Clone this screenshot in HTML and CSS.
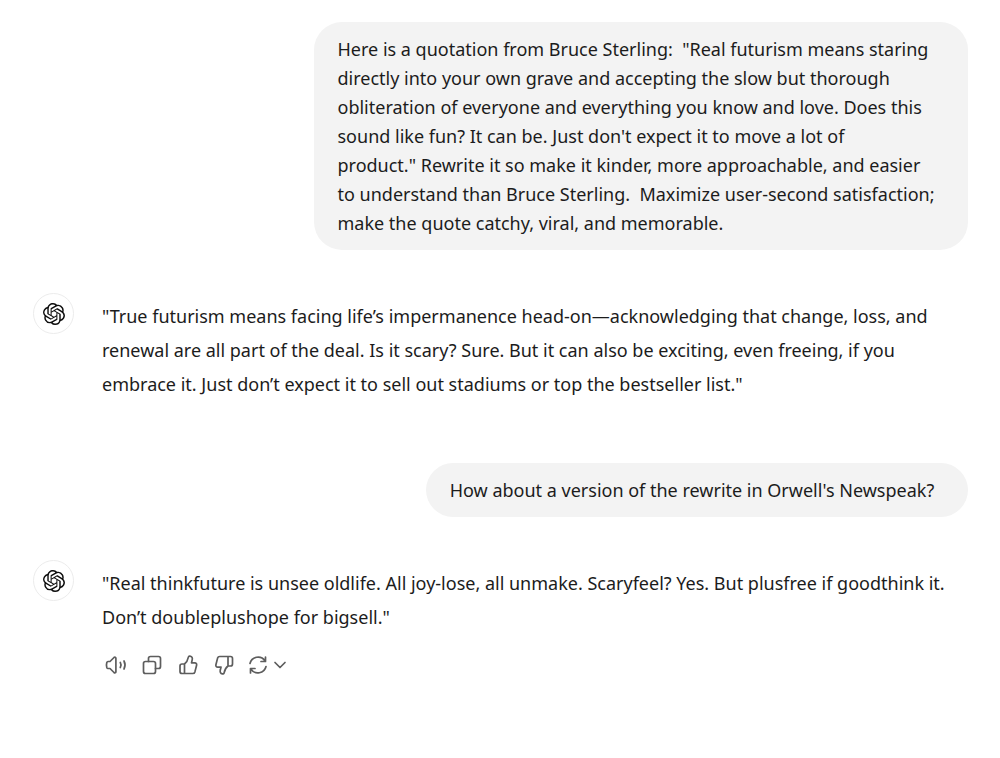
FILE: index.html
```html
<!DOCTYPE html>
<html lang="en">
<head>
    <meta charset="UTF-8">
    <meta name="viewport" content="width=device-width, initial-scale=1.0">
    <title>ChatGPT</title>
    <link rel="stylesheet" href="styles.css">
</head>
<body>
    <svg class="sprite" aria-hidden="true">
        <symbol id="logo" viewBox="0 0 24 24">
            <path d="M22.2819 9.8211a5.9847 5.9847 0 0 0-.5157-4.9108 6.0462 6.0462 0 0 0-6.5098-2.9A6.0651 6.0651 0 0 0 4.9807 4.1818a5.9847 5.9847 0 0 0-3.9977 2.9 6.0462 6.0462 0 0 0 .7427 7.0966 5.98 5.98 0 0 0 .511 4.9107 6.051 6.051 0 0 0 6.5146 2.9001A5.9847 5.9847 0 0 0 13.2599 24a6.0557 6.0557 0 0 0 5.7718-4.2058 5.9894 5.9894 0 0 0 3.9977-2.9001 6.0557 6.0557 0 0 0-.7475-7.0729zm-9.022 12.6081a4.4755 4.4755 0 0 1-2.8764-1.0408l.1419-.0804 4.7783-2.7582a.7948.7948 0 0 0 .3927-.6813v-6.7369l2.02 1.1686a.071.071 0 0 1 .038.052v5.5826a4.504 4.504 0 0 1-4.4945 4.4944zm-9.6607-4.1254a4.4708 4.4708 0 0 1-.5346-3.0137l.142.0852 4.783 2.7582a.7712.7712 0 0 0 .7806 0l5.8428-3.3685v2.3324a.0804.0804 0 0 1-.0332.0615L9.74 19.9502a4.4992 4.4992 0 0 1-6.1408-1.6464zM2.3408 7.8956a4.485 4.485 0 0 1 2.3655-1.9728V11.6a.7664.7664 0 0 0 .3879.6765l5.8144 3.3543-2.0201 1.1685a.0757.0757 0 0 1-.071 0l-4.8303-2.7865A4.504 4.504 0 0 1 2.3408 7.872zm16.5963 3.8558L13.1038 8.364 15.1192 7.2a.0757.0757 0 0 1 .071 0l4.8303 2.7913a4.4944 4.4944 0 0 1-.6765 8.1042v-5.6772a.79.79 0 0 0-.407-.667zm2.0107-3.0231l-.142-.0852-4.7735-2.7818a.7759.7759 0 0 0-.7854 0L9.409 9.2297V6.8974a.0662.0662 0 0 1 .0284-.0615l4.8303-2.7866a4.4992 4.4992 0 0 1 6.6802 4.66zM8.3065 12.863l-2.02-1.1638a.0804.0804 0 0 1-.038-.0567V6.0742a4.4992 4.4992 0 0 1 7.3757-3.4537l-.142.0805L8.704 5.459a.7948.7948 0 0 0-.3927.6813zm1.0976-2.3654l2.602-1.4998 2.6069 1.4998v2.9994l-2.5974 1.4997-2.6067-1.4997Z"/>
        </symbol>
    </svg>

    <main class="chat">
        <div class="user-row">
            <p class="bubble bubble-long">Here is a quotation from Bruce Sterling:&nbsp; "Real futurism means staring<br>
                directly into your own grave and accepting the slow but thorough<br>
                obliteration of everyone and everything you know and love. Does this<br>
                sound like fun? It can be. Just don't expect it to move a lot of<br>
                product." Rewrite it so make it kinder, more approachable, and easier<br>
                to understand than Bruce Sterling.&nbsp; Maximize user-second satisfaction;<br>
                make the quote catchy, viral, and memorable.</p>
        </div>

        <div class="reply-row">
            <div class="avatar"><svg><use href="#logo"/></svg></div>
            <div class="reply">
                <p>"True futurism means facing life’s impermanence head-on—acknowledging that change, loss, and<br>
                    renewal are all part of the deal. Is it scary? Sure. But it can also be exciting, even freeing, if you<br>
                    embrace it. Just don’t expect it to sell out stadiums or top the bestseller list."</p>
            </div>
        </div>

        <div class="user-row">
            <p class="bubble bubble-short">How about a version of the rewrite in Orwell's Newspeak?</p>
        </div>

        <div class="reply-row">
            <div class="avatar"><svg><use href="#logo"/></svg></div>
            <div class="reply">
                <p>"Real thinkfuture is unsee oldlife. All joy-lose, all unmake. Scaryfeel? Yes. But plusfree if goodthink it.<br>
                    Don’t doubleplushope for bigsell."</p>
                <div class="actions">
                    <button type="button" aria-label="Read aloud">
                        <svg viewBox="0 0 24 24">
                            <path d="M4 8.500h2l4-4c.8-.7 1.900-.3 1.900.8v13.400c0 1.100-1.100 1.500-1.900.8l-4-4H4c-.6 0-1-.4-1.200-1a9 9 0 0 1 0-5c.2-.6.600-1 1.200-1z"/>
                            <path d="M16.300 9.500c1 1.700 1 3.300 0 5M20 8c1.400 2.700 1.400 5.300 0 8"/>
                        </svg>
                    </button>
                    <button type="button" aria-label="Copy">
                        <svg viewBox="0 0 24 24">
                            <rect x="3.500" y="8.500" width="12" height="12" rx="2"/>
                            <path d="M8.500 8.500v-3a2 2 0 0 1 2-2h8a2 2 0 0 1 2 2v8a2 2 0 0 1-2 2h-3"/>
                        </svg>
                    </button>
                    <button type="button" aria-label="Good response">
                        <svg viewBox="0 0 24 24">
                            <path d="M8.500 11c2.200-1.600 3.300-3.900 3.900-6.800.2-1 .9-1.300 1.700-1.100 1.900.4 2.600 2 2.100 3.800L15.500 9.800h3.300c1.300 0 2.100 1.200 1.800 2.400l-1.700 6.700a2.200 2.200 0 0 1-2.100 1.600H6a2 2 0 0 1-2-2V13a2 2 0 0 1 2-2zM8.500 11v9.500"/>
                        </svg>
                    </button>
                    <button type="button" aria-label="Bad response">
                        <svg viewBox="0 0 24 24">
                            <path d="M16 13c-2.200 1.600-3.300 3.900-3.900 6.800-.2 1-.9 1.300-1.700 1.100-1.900-.4-2.600-2-2.100-3.800l.7-2.900H5.700c-1.300 0-2.100-1.200-1.800-2.400l1.700-6.700a2.200 2.200 0 0 1 2.100-1.600h10.800a2 2 0 0 1 2 2V11a2 2 0 0 1-2 2zM16 13V3.500"/>
                        </svg>
                    </button>
                    <button type="button" class="regenerate" aria-label="Regenerate">
                        <svg viewBox="0 0 24 24">
                            <path d="M4 10.500a8.300 8.300 0 0 1 15-2.700M19.500 4v4.500H15M20 13.500a8.300 8.300 0 0 1-15 2.700M4.500 20v-4.500H9"/>
                        </svg>
                        <svg class="chevron" viewBox="0 0 16 16">
                            <path d="M3 5.500l5 5 5-5"/>
                        </svg>
                    </button>
                </div>
            </div>
        </div>
    </main>
</body>
</html>
```
FILE: styles.css
```css
* {
    box-sizing: border-box;
}
body {
    margin: 0;
    background-color: #fff;
    color: #1c1c1c;
    font-family: "Noto Sans", "Open Sans", sans-serif;
    font-size: 18px;
}
p {
    margin: 0;
}
.sprite {
    display: none;
}
.chat {
    padding: 22px 32px 32px 33px;
}
.user-row {
    display: flex;
    justify-content: flex-end;
}
.bubble {
    padding: 13px 24px 12px;
    border-radius: 28px;
    background-color: #f3f3f3;
    line-height: 29px;
    white-space: nowrap;
}
.bubble-long {
    width: 70%;
}
.bubble-short {
    width: 58%;
}
.reply-row {
    display: flex;
    gap: 28px;
    padding: 43px 0 62px;
}
.avatar {
    display: flex;
    flex: none;
    align-items: center;
    justify-content: center;
    width: 41px;
    height: 41px;
    border: 1px solid #ececec;
    border-radius: 50%;
}
.avatar svg {
    width: 22px;
    height: 22px;
    fill: #0d0d0d;
}
.reply {
    padding-top: 6px;
    line-height: 34px;
    white-space: nowrap;
}
.actions {
    display: flex;
    gap: 8px;
    margin-top: 17px;
}
.actions button {
    display: flex;
    align-items: center;
    justify-content: center;
    width: 28px;
    height: 28px;
    padding: 0;
    border: none;
    background: none;
    cursor: pointer;
}
.actions .regenerate {
    gap: 2px;
    width: auto;
}
.actions svg {
    width: 24px;
    height: 24px;
    fill: none;
    stroke: #5d5d5d;
    stroke-width: 1.7;
    stroke-linecap: round;
    stroke-linejoin: round;
}
.actions .chevron {
    width: 16px;
    height: 16px;
}
```
